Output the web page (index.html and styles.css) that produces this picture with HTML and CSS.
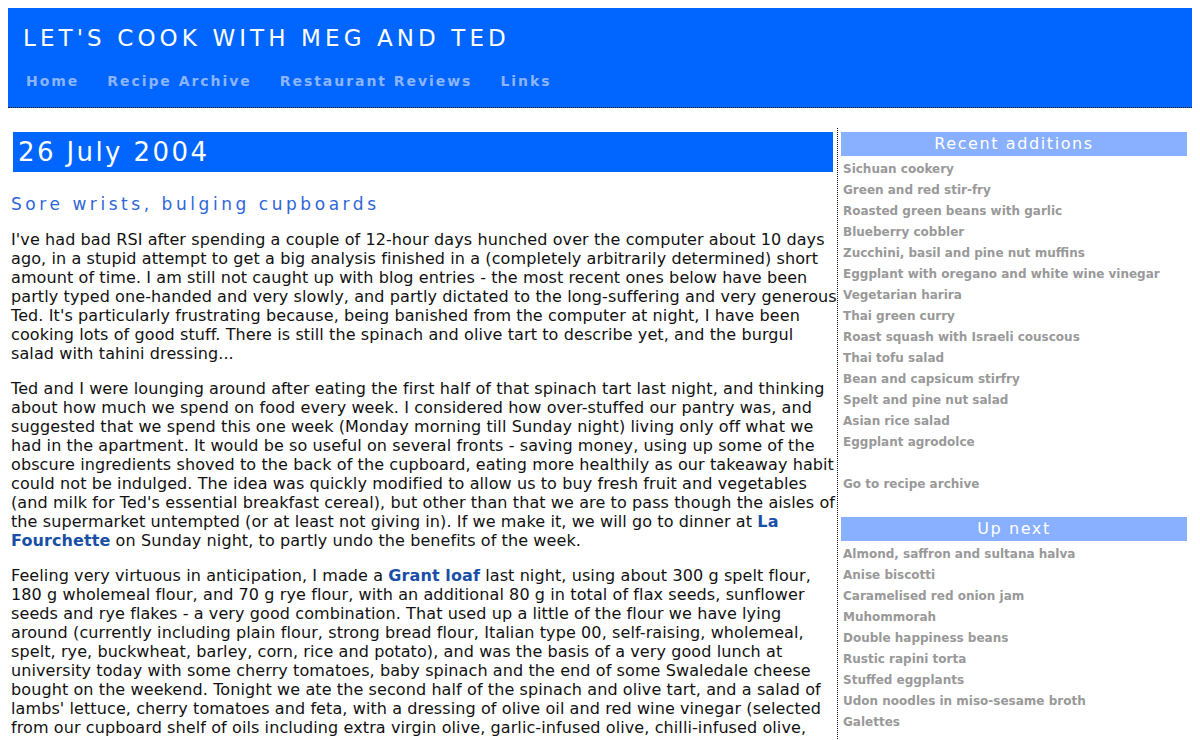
FILE: index.html
```html
<!DOCTYPE html>
<html>
<head>
<meta charset="utf-8">
<title>Let's cook with Meg and Ted</title>
<link rel="stylesheet" href="styles.css">
</head>
<body>
<div class="header">
  <h1 class="site-title">LET'S COOK WITH MEG AND TED</h1>
  <nav class="nav">
    <a href="#">Home</a>
    <a href="#">Recipe Archive</a>
    <a href="#">Restaurant Reviews</a>
    <a href="#">Links</a>
  </nav>
</div>
<div class="page">
  <div class="main">
    <h2 class="date">26 July 2004</h2>
    <h3 class="post-title">Sore wrists, bulging cupboards</h3>
    <p>I've had bad RSI after spending a couple of 12-hour days hunched over the computer about 10 days ago, in a stupid attempt to get a big analysis finished in a (completely arbitrarily determined) short amount of time. I am still not caught up with blog entries - the most recent ones below have been partly typed one-handed and very slowly, and partly dictated to the long-suffering and very generous Ted. It's particularly frustrating because, being banished from the computer at night, I have been cooking lots of good stuff. There is still the spinach and olive tart to describe yet, and the burgul salad with tahini dressing...</p>
    <p>Ted and I were lounging around after eating the first half of that spinach tart last night, and thinking about how much we spend on food every week. I considered how over-stuffed our pantry was, and suggested that we spend this one week (Monday morning till Sunday night) living only off what we had in the apartment. It would be so useful on several fronts - saving money, using up some of the obscure ingredients shoved to the back of the cupboard, eating more healthily as our takeaway habit could not be indulged. The idea was quickly modified to allow us to buy fresh fruit and vegetables (and milk for Ted's essential breakfast cereal), but other than that we are to pass though the aisles of the supermarket untempted (or at least not giving in). If we make it, we will go to dinner at <a href="#">La Fourchette</a> on Sunday night, to partly undo the benefits of the week.</p>
    <p>Feeling very virtuous in anticipation, I made a <a href="#">Grant loaf</a> last night, using about 300 g spelt flour, 180 g wholemeal flour, and 70 g rye flour, with an additional 80 g in total of flax seeds, sunflower seeds and rye flakes - a very good combination. That used up a little of the flour we have lying around (currently including plain flour, strong bread flour, Italian type 00, self-raising, wholemeal, spelt, rye, buckwheat, barley, corn, rice and potato), and was the basis of a very good lunch at university today with some cherry tomatoes, baby spinach and the end of some Swaledale cheese bought on the weekend. Tonight we ate the second half of the spinach and olive tart, and a salad of lambs' lettuce, cherry tomatoes and feta, with a dressing of olive oil and red wine vinegar (selected from our cupboard shelf of oils including extra virgin olive, garlic-infused olive, chilli-infused olive, sesame, toasted sesame, walnut, hazelnut, flaxseed and grapeseed, and vinegars including red wine, white wine, balsamic, sherry and rice).</p>
  </div>
  <aside class="sidebar">
    <h4 class="side-head">Recent additions</h4>
    <ul class="side-list">
      <li><a href="#">Sichuan cookery</a></li>
      <li><a href="#">Green and red stir-fry</a></li>
      <li><a href="#">Roasted green beans with garlic</a></li>
      <li><a href="#">Blueberry cobbler</a></li>
      <li><a href="#">Zucchini, basil and pine nut muffins</a></li>
      <li><a href="#">Eggplant with oregano and white wine vinegar</a></li>
      <li><a href="#">Vegetarian harira</a></li>
      <li><a href="#">Thai green curry</a></li>
      <li><a href="#">Roast squash with Israeli couscous</a></li>
      <li><a href="#">Thai tofu salad</a></li>
      <li><a href="#">Bean and capsicum stirfry</a></li>
      <li><a href="#">Spelt and pine nut salad</a></li>
      <li><a href="#">Asian rice salad</a></li>
      <li><a href="#">Eggplant agrodolce</a></li>
    </ul>
    <p class="side-more"><a href="#">Go to recipe archive</a></p>
    <h4 class="side-head">Up next</h4>
    <ul class="side-list">
      <li><a href="#">Almond, saffron and sultana halva</a></li>
      <li><a href="#">Anise biscotti</a></li>
      <li><a href="#">Caramelised red onion jam</a></li>
      <li><a href="#">Muhommorah</a></li>
      <li><a href="#">Double happiness beans</a></li>
      <li><a href="#">Rustic rapini torta</a></li>
      <li><a href="#">Stuffed eggplants</a></li>
      <li><a href="#">Udon noodles in miso-sesame broth</a></li>
      <li><a href="#">Galettes</a></li>
    </ul>
  </aside>
</div>
</body>
</html>
```
FILE: styles.css
```css
html, body {
  background: #ffffff;
}
body {
  margin: 8px;
  font-family: "DejaVu Sans", Verdana, sans-serif;
  color: #111111;
}
.header {
  background: #0066ff;
  height: 99px;
  border-bottom: 1px dotted #1a1a1a;
  padding: 0 15px;
}
.site-title {
  margin: 0;
  padding-top: 16px;
  font-weight: normal;
  font-size: 23px;
  letter-spacing: 4.1px;
  color: #ffffff;
  line-height: 28px;
}
.nav {
  display: flex;
  gap: 28px;
  margin-top: 21px;
  padding-left: 3px;
}
.nav a {
  color: #8cb4ff;
  font-weight: bold;
  font-size: 14px;
  letter-spacing: 1.95px;
  text-decoration: none;
}
.page {
  display: flex;
  margin-top: 20px;
}
.main {
  width: 826px;
  padding-left: 3px;
  padding-right: 0;
  border-right: 1px dotted #111;
}
.date {
  margin: 4px 4px 0 2px;
  background: #0066ff;
  color: #fff;
  font-weight: normal;
  font-size: 26px;
  letter-spacing: 2.4px;
  line-height: 40px;
  padding-left: 5px;
}
.post-title {
  margin: 22px 0 16px;
  font-weight: normal;
  font-size: 17px;
  letter-spacing: 3.55px;
  color: #2f66d8;
}
.main p {
  margin: 0 0 16px;
  font-size: 16px;
  line-height: 19px;
  letter-spacing: 0.1px;
}
.main p a {
  color: #1a4fa8;
  font-weight: bold;
  text-decoration: none;
}
.sidebar {
  width: 346px;
  padding-left: 3px;
  padding-top: 4px;
}
.side-head {
  margin: 0;
  background: #88b0ff;
  color: #fff;
  font-weight: normal;
  text-align: center;
  font-size: 16px;
  letter-spacing: 1.6px;
  line-height: 24px;
}
.side-list {
  list-style: none;
  margin: 0;
  padding: 3px 0 0 2px;
}
.side-list li, .side-more {
  font-size: 12px;
  line-height: 21px;
  font-weight: bold;
}
.sidebar a {
  color: #999999;
  text-decoration: none;
}
.side-more {
  margin: 21px 0 22px;
  padding-left: 2px;
}
```
